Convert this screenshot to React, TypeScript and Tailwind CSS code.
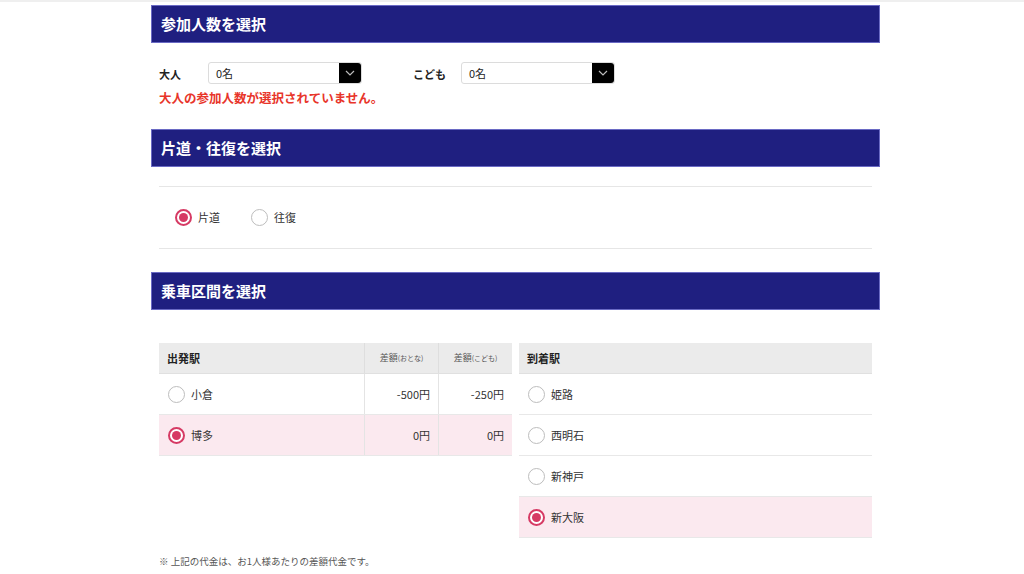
import React from "react";

const font = { fontFamily: '"Noto Sans CJK JP", "Noto Sans", sans-serif' };

function Radio({ checked }: { checked?: boolean }) {
  return checked ? (
    <span className="flex h-[17px] w-[17px] items-center justify-center rounded-full border-2 border-[#d63a64] bg-white">
      <span className="h-[9px] w-[9px] rounded-full bg-[#d63a64]" />
    </span>
  ) : (
    <span className="h-[17px] w-[17px] rounded-full border border-[#bdbdbd] bg-white" />
  );
}

function Header({ title }: { title: string }) {
  return (
    <div className="flex h-[38px] items-center border border-[#6a6ac4] bg-[#1f1f80] pl-[9px] text-[15px] font-bold text-white">
      {title}
    </div>
  );
}

function Select() {
  return (
    <div className="flex h-[22px] w-[154px] rounded-[3px] border border-[#dcdcdc] bg-white">
      <div className="flex flex-1 items-center pl-[7px] text-[11px] text-[#222]">0名</div>
      <div className="flex w-[22px] items-center justify-center rounded-r-[3px] bg-black">
        <svg width="10" height="6" viewBox="0 0 10 6" fill="none">
          <path d="M1 1l4 4 4-4" stroke="#bbb" strokeWidth="1.2" />
        </svg>
      </div>
    </div>
  );
}

export default function App() {
  const dep = [
    { name: "小倉", a: "-500円", c: "-250円", sel: false },
    { name: "博多", a: "0円", c: "0円", sel: true },
  ];
  const arr = [
    { name: "姫路", sel: false },
    { name: "西明石", sel: false },
    { name: "新神戸", sel: false },
    { name: "新大阪", sel: true },
  ];
  return (
    <div style={font} className="min-h-[574px] bg-white">
      <div className="h-[2px] bg-[#efefef]" />
      <div className="ml-[151px] w-[729px] pt-[3px]">
        <Header title="参加人数を選択" />
        <div className="px-[8px] pt-[19px]">
          <div className="flex items-center">
            <span className="w-[49px] pt-[3px] text-[11px] font-bold text-[#222]">大人</span>
            <Select />
            <span className="ml-[51px] w-[48px] pt-[3px] text-[11px] font-bold text-[#222]">こども</span>
            <Select />
          </div>
          <div className="mt-[5px] text-[12.5px] font-bold leading-[18px] text-[#e8352a]">
            大人の参加人数が選択されていません。
          </div>
        </div>
        <div className="mt-[22px]">
          <Header title="片道・往復を選択" />
        </div>
        <div className="mx-[8px] mt-[19px] border-y border-[#e6e6e6] py-[22px]">
          <div className="flex items-center pl-[16px] text-[11px] text-[#333]">
            <Radio checked />
            <span className="ml-[6px]">片道</span>
            <span className="ml-[31px]" />
            <Radio />
            <span className="ml-[6px]">往復</span>
          </div>
        </div>
        <div className="mt-[23px]">
          <Header title="乗車区間を選択" />
        </div>
        <div className="mx-[8px] mt-[33px] flex gap-[7px] text-[11px] text-[#333]">
          <div className="w-[353px]">
            <div className="flex h-[31px] border-b border-[#e0e0e0] bg-[#ebebeb]">
              <div className="flex flex-1 items-center pl-[8px] font-bold text-[#222]">出発駅</div>
              <div className="flex w-[74px] items-center justify-center border-l border-[#dedede] text-[9px] text-[#555]">
                差額<span className="text-[7px]">(おとな)</span>
              </div>
              <div className="flex w-[74px] items-center justify-center border-l border-[#dedede] text-[9px] text-[#555]">
                差額<span className="text-[7px]">(こども)</span>
              </div>
            </div>
            {dep.map((r) => (
              <div
                key={r.name}
                className={`flex h-[41px] border-b border-[#e8e8e8] ${r.sel ? "bg-[#fbe9ef]" : "bg-white"}`}
              >
                <div className="flex flex-1 items-center gap-[6px] pl-[9px]">
                  <Radio checked={r.sel} />
                  <span>{r.name}</span>
                </div>
                <div className="flex w-[74px] items-center justify-end border-l border-[#e4e4e4] pr-[8px]">{r.a}</div>
                <div className="flex w-[74px] items-center justify-end border-l border-[#e4e4e4] pr-[8px]">{r.c}</div>
              </div>
            ))}
          </div>
          <div className="w-[353px]">
            <div className="flex h-[31px] items-center border-b border-[#e0e0e0] bg-[#ebebeb] pl-[8px] font-bold text-[#222]">
              到着駅
            </div>
            {arr.map((r) => (
              <div
                key={r.name}
                className={`flex h-[41px] items-center gap-[6px] border-b border-[#e8e8e8] pl-[9px] ${r.sel ? "bg-[#fbe9ef]" : "bg-white"}`}
              >
                <Radio checked={r.sel} />
                <span>{r.name}</span>
              </div>
            ))}
          </div>
        </div>
        <div className="mt-[16px] pl-[8px] text-[9.5px] text-[#555]">※ 上記の代金は、お1人様あたりの差額代金です。</div>
      </div>
    </div>
  );
}
